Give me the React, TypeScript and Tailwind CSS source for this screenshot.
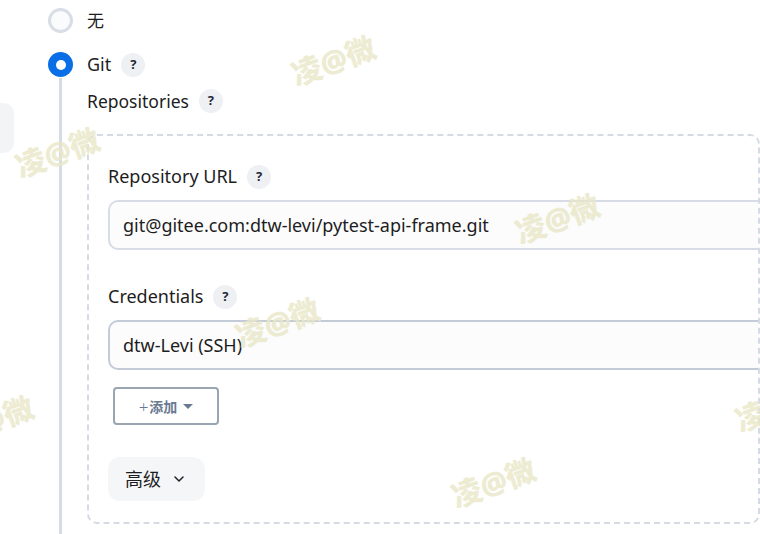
import { ChevronDown } from 'lucide-react'

const font = { fontFamily: '"Noto Sans", "Noto Sans CJK SC", sans-serif' }

function Help() {
  return (
    <span className="ml-[10px] inline-flex h-6 w-6 items-center justify-center rounded-full bg-[#eef0f4] text-[13px] font-bold text-[#1f2937]">
      ?
    </span>
  )
}

function Label({ text, size = 'text-[18px]' }: { text: string; size?: string }) {
  return (
    <div className={`flex items-center ${size} text-[#1d1d22]`}>
      <span>{text}</span>
      <Help />
    </div>
  )
}

const marks = [
  { x: 290, y: 38 },
  { x: 14, y: 130 },
  { x: 514, y: 196 },
  { x: 234, y: 300 },
  { x: -52, y: 398 },
  { x: 734, y: 384 },
  { x: 450, y: 460 },
]

export default function App() {
  return (
    <div className="relative h-[534px] w-[760px] overflow-hidden bg-white" style={font}>
      {/* left fragment of sidebar item */}
      <div className="absolute left-[-20px] top-[103px] h-[50px] w-[34px] rounded-r-[10px] bg-[#f3f4f6]" />

      <div className="pl-[48px] pt-[8px]">
        {/* radio: none */}
        <div className="flex h-[25px] items-center">
          <span className="h-[25px] w-[25px] rounded-full border-[3px] border-[#d8dde6] bg-[#fafbfc]" />
          <span className="ml-[14px] text-[17px] text-[#1d1d22]">无</span>
        </div>

        {/* radio: git */}
        <div className="mt-[19px] flex h-[25px] items-center">
          <span className="flex h-[25px] w-[25px] items-center justify-center rounded-full bg-[#0a6fe6]">
            <span className="h-[10px] w-[10px] rounded-full bg-white" />
          </span>
          <span className="ml-[14px] text-[18px] text-[#1d1d22]">Git</span>
          <Help />
        </div>

        <div className="ml-[11px] mt-[1px] border-l-[3px] border-[#d6dce5] pb-[30px] pl-[25px]">
          <div className="pt-[10px]">
            <Label text="Repositories" size="text-[17.5px]" />
          </div>

          <div className="mt-[20px] h-[390px] rounded-[10px] border-2 border-dashed border-[#d5dae3] pl-[19px] pt-[27px]">
            <Label text="Repository URL" />
            <div className="mt-[10px] flex h-[50px] items-center rounded-l-[10px] border-2 border-r-0 border-[#d7dce6] bg-[#fcfcfc] pl-[13px] text-[18px] text-[#1d1d22]">
              git@gitee.com:dtw-levi/pytest-api-frame.git
            </div>

            <div className="mt-[33px]">
              <Label text="Credentials" />
            </div>
            <div className="mt-[10px] flex h-[50px] items-center rounded-l-[10px] border-2 border-r-0 border-[#c3cbd8] bg-[#fcfcfc] pl-[13px] text-[18px] text-[#1d1d22]">
              dtw-Levi (SSH)
            </div>

            <button className="ml-[5px] mt-[17px] flex h-[38px] w-[106px] items-center justify-center rounded-[4px] border-2 border-[#9aa5b2] text-[14px] font-semibold text-[#6a7a92]">
              <span className="mr-[1px] text-[17px] font-light leading-none">+</span>添加
              <span className="ml-[6px] h-0 w-0 border-x-[5px] border-t-[5px] border-x-transparent border-t-[#6a7a92]" />
            </button>

            <button className="mt-[32px] flex h-[44px] w-[97px] items-center rounded-[12px] bg-[#f5f6f8] pl-[17px] text-[18px] text-[#1d1d22]">
              高级
              <ChevronDown className="ml-[10px] h-[16px] w-[16px]" strokeWidth={2.2} />
            </button>
          </div>
        </div>
      </div>

      {/* watermarks */}
      {marks.map((m, i) => (
        <span
          key={i}
          className="pointer-events-none absolute -rotate-[20deg] whitespace-nowrap text-[30px] font-black text-[#e9e8c8] opacity-80"
          style={{ left: m.x, top: m.y }}
        >
          凌@微
        </span>
      ))}
    </div>
  )
}
